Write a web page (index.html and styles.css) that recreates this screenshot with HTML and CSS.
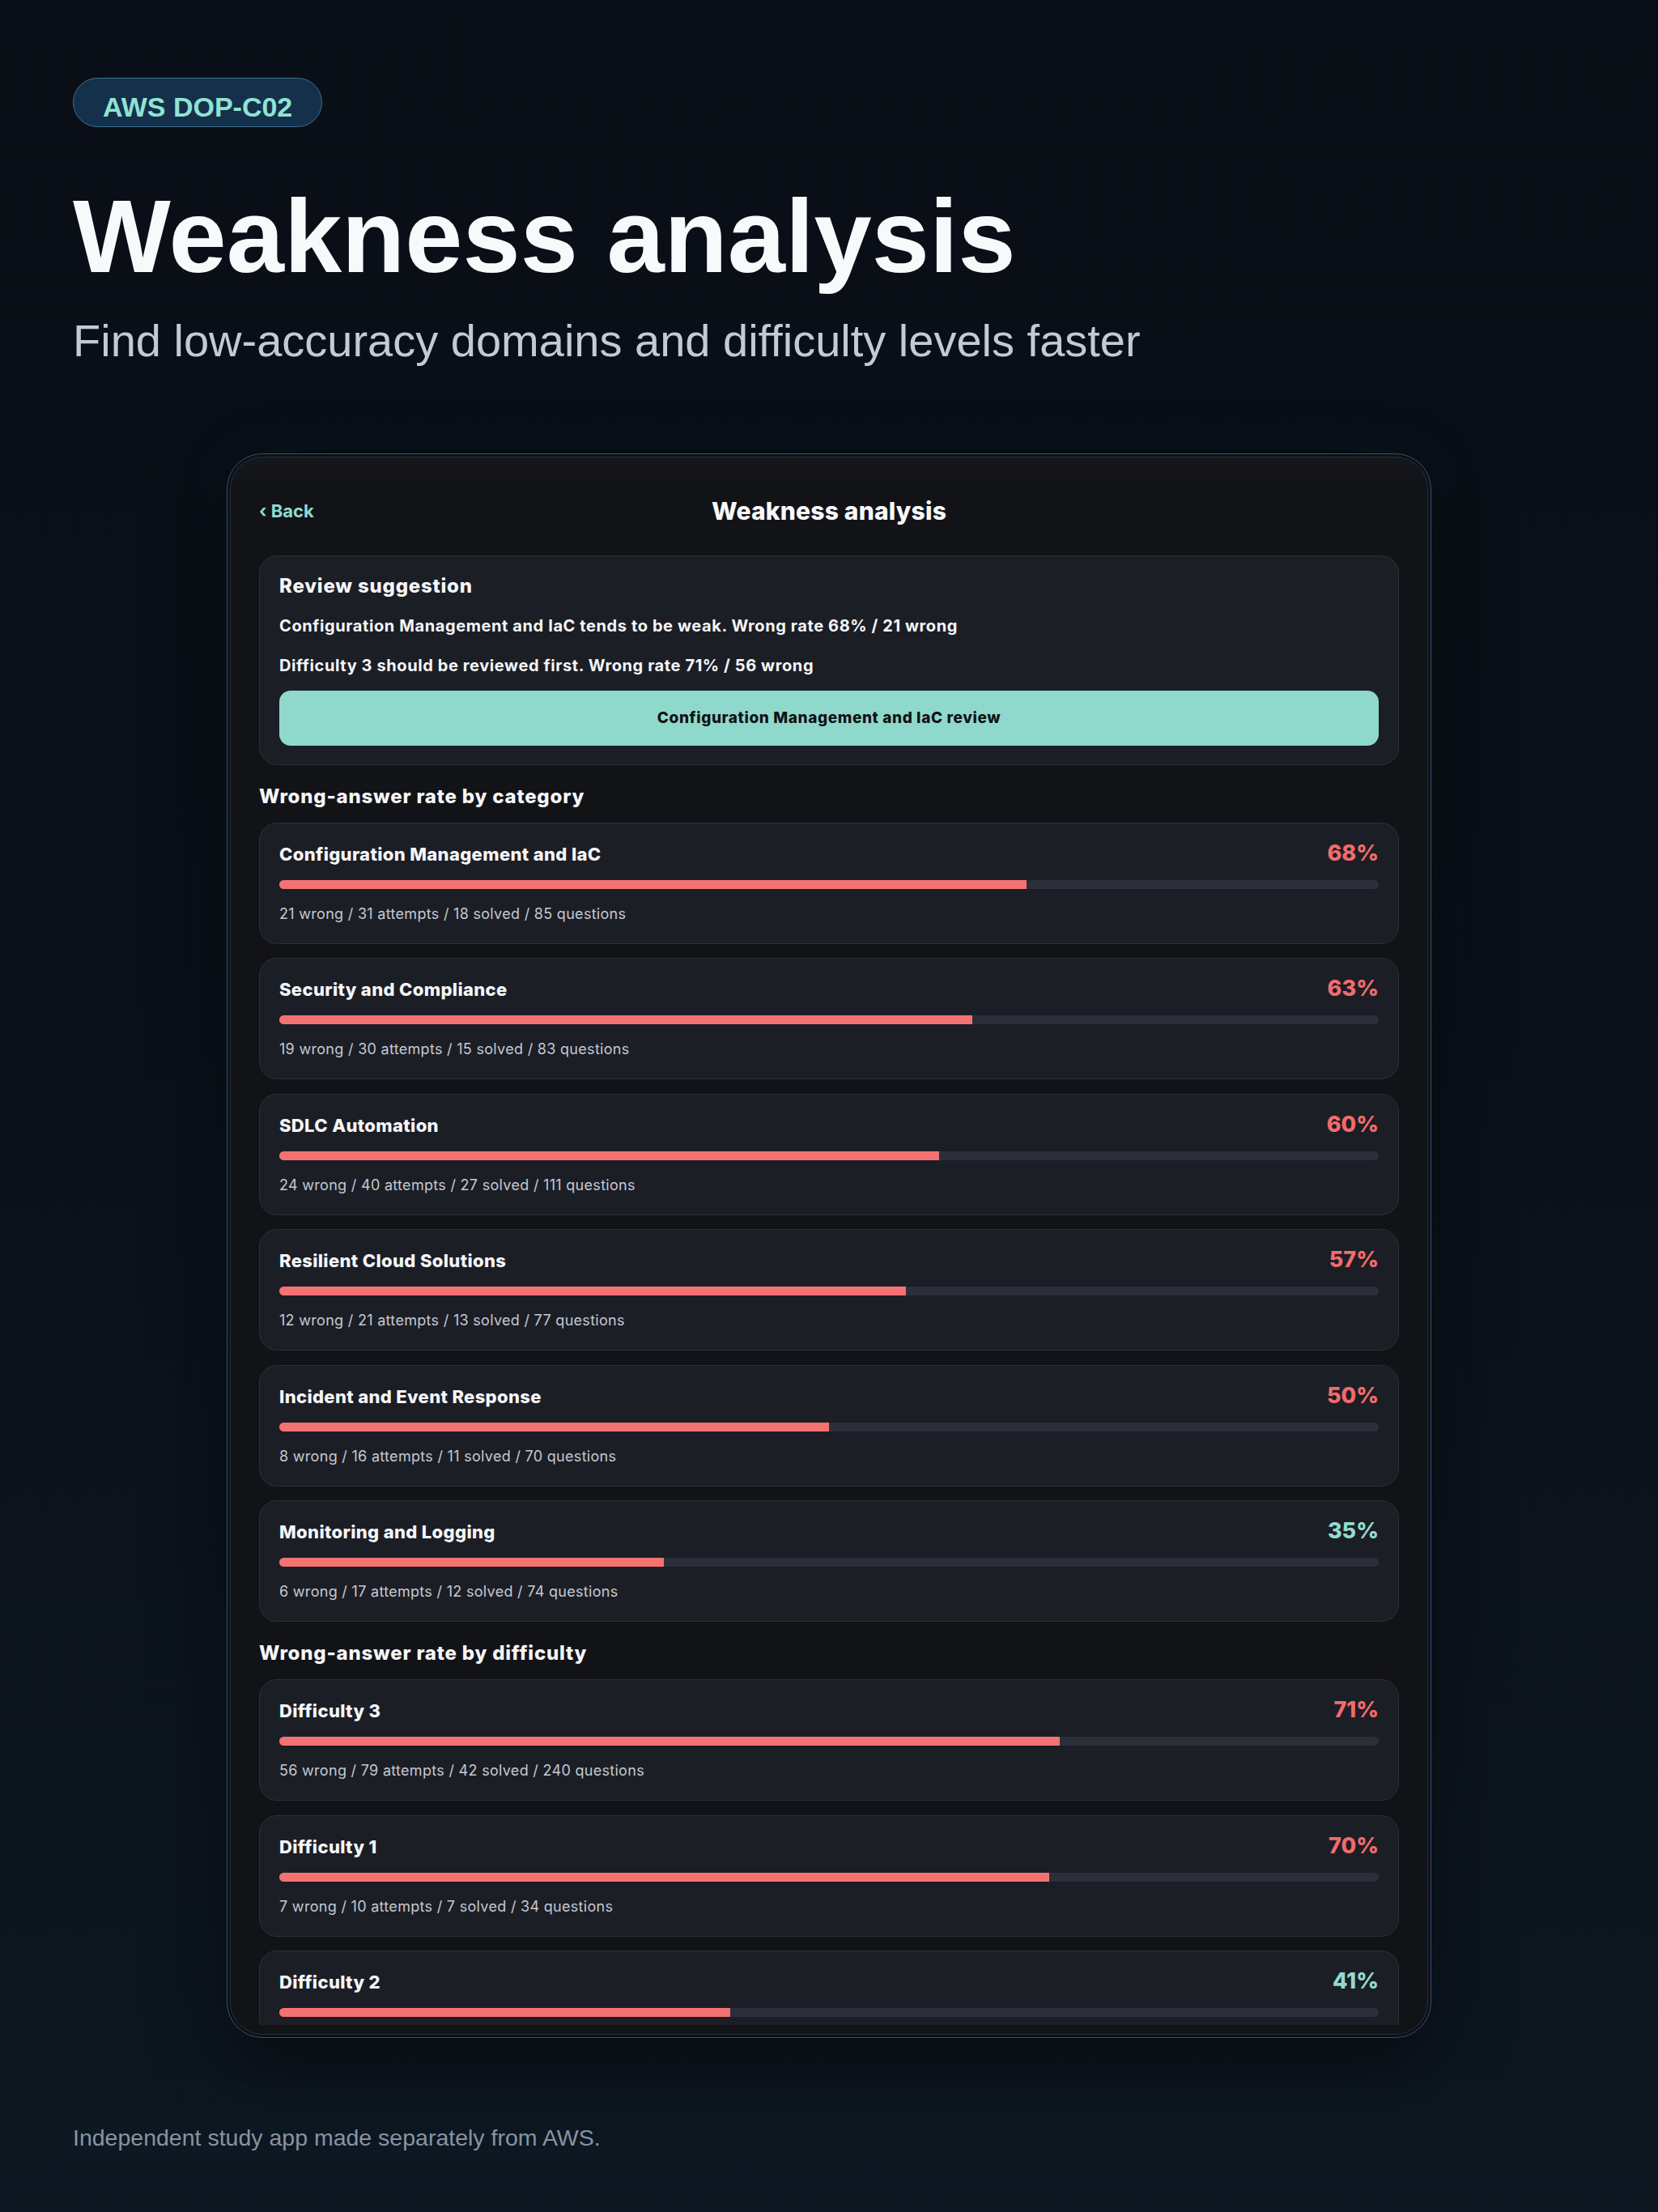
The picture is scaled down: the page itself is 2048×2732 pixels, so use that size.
FILE: index.html
```html
<!DOCTYPE html>
<html lang="en">
<head>
<meta charset="utf-8">
<title>Weakness analysis</title>
<link rel="stylesheet" href="styles.css">
</head>
<body>
<div class="page">
  <header class="hero">
    <span class="badge">AWS DOP-C02</span>
    <h1 class="title">Weakness analysis</h1>
    <p class="subtitle">Find low-accuracy domains and difficulty levels faster</p>
  </header>

  <div class="device">
    <div class="screen">
      <div class="nav">
        <span class="back">‹ Back</span>
        <span class="nav-title">Weakness analysis</span>
        <span class="nav-spacer"></span>
      </div>
      <div class="scroll">
        <section class="card review">
          <h2 class="review-title">Review suggestion</h2>
          <p class="review-line">Configuration Management and IaC tends to be weak. Wrong rate 68% / 21 wrong</p>
          <p class="review-line last">Difficulty 3 should be reviewed first. Wrong rate 71% / 56 wrong</p>
          <div class="btn">Configuration Management and IaC review</div>
        </section>

        <h3 class="section-title">Wrong-answer rate by category</h3>
        <div class="list">
          <div class="card stat">
            <div class="row"><span class="name">Configuration Management and IaC</span><span class="pct bad">68%</span></div>
            <div class="track"><div class="fill" style="width:68%"></div></div>
            <div class="meta">21 wrong / 31 attempts / 18 solved / 85 questions</div>
          </div>
          <div class="card stat">
            <div class="row"><span class="name">Security and Compliance</span><span class="pct bad">63%</span></div>
            <div class="track"><div class="fill" style="width:63%"></div></div>
            <div class="meta">19 wrong / 30 attempts / 15 solved / 83 questions</div>
          </div>
          <div class="card stat">
            <div class="row"><span class="name">SDLC Automation</span><span class="pct bad">60%</span></div>
            <div class="track"><div class="fill" style="width:60%"></div></div>
            <div class="meta">24 wrong / 40 attempts / 27 solved / 111 questions</div>
          </div>
          <div class="card stat">
            <div class="row"><span class="name">Resilient Cloud Solutions</span><span class="pct bad">57%</span></div>
            <div class="track"><div class="fill" style="width:57%"></div></div>
            <div class="meta">12 wrong / 21 attempts / 13 solved / 77 questions</div>
          </div>
          <div class="card stat">
            <div class="row"><span class="name">Incident and Event Response</span><span class="pct bad">50%</span></div>
            <div class="track"><div class="fill" style="width:50%"></div></div>
            <div class="meta">8 wrong / 16 attempts / 11 solved / 70 questions</div>
          </div>
          <div class="card stat">
            <div class="row"><span class="name">Monitoring and Logging</span><span class="pct ok">35%</span></div>
            <div class="track"><div class="fill" style="width:35%"></div></div>
            <div class="meta">6 wrong / 17 attempts / 12 solved / 74 questions</div>
          </div>
        </div>

        <h3 class="section-title">Wrong-answer rate by difficulty</h3>
        <div class="list">
          <div class="card stat">
            <div class="row"><span class="name">Difficulty 3</span><span class="pct bad">71%</span></div>
            <div class="track"><div class="fill" style="width:71%"></div></div>
            <div class="meta">56 wrong / 79 attempts / 42 solved / 240 questions</div>
          </div>
          <div class="card stat">
            <div class="row"><span class="name">Difficulty 1</span><span class="pct bad">70%</span></div>
            <div class="track"><div class="fill" style="width:70%"></div></div>
            <div class="meta">7 wrong / 10 attempts / 7 solved / 34 questions</div>
          </div>
          <div class="card stat">
            <div class="row"><span class="name">Difficulty 2</span><span class="pct ok">41%</span></div>
            <div class="track"><div class="fill" style="width:41%"></div></div>
          </div>
        </div>
      </div>
    </div>
  </div>

  <p class="footer">Independent study app made separately from AWS.</p>
</div>
</body>
</html>
```
FILE: styles.css
```css
html, body {
  margin: 0;
  padding: 0;
}

body {
  width: 2048px;
  min-height: 2732px;
  background: linear-gradient(180deg, #0a0e16 0%, #0a1019 45%, #0e1822 100%);
  font-family: "Liberation Sans", Arial, sans-serif;
}

.page {
  box-sizing: border-box;
  height: 2732px;
  padding: 96px 90px 0;
}

.hero {
  display: flex;
  flex-direction: column;
  align-items: flex-start;
}

.badge {
  display: inline-block;
  padding: 16px 36px 4px;
  font-size: 34px;
  line-height: 39px;
  font-weight: 700;
  color: #8fe3d4;
  background: #15304a;
  border: 1px solid #3f6f92;
  border-radius: 31px;
}

.title {
  margin: 71px 0 0;
  font-size: 128px;
  line-height: 1;
  font-weight: 700;
  color: #f7f9fb;
}

.subtitle {
  margin: 31px 0 0;
  font-size: 56px;
  line-height: 1.2;
  font-weight: 400;
  color: #c3cad5;
}

.device {
  box-sizing: border-box;
  width: 1488px;
  margin: 106px auto 0;
  padding: 3px;
  border: 1px solid #3a5068;
  border-radius: 44px;
  background: #0c1016;
  box-shadow: 0 30px 90px rgba(0, 0, 0, 0.55), 0 0 60px rgba(20, 40, 60, 0.25);
}

.screen {
  padding: 48px 35px 11px;
  border: 1px solid #213041;
  border-radius: 40px;
  background: linear-gradient(180deg, #15171c 0px, #121317 40px, #121317 100%);
  font-family: Inter, "Noto Sans", sans-serif;
  color: #f5f6f8;
  overflow: hidden;
}

.nav {
  display: grid;
  grid-template-columns: 1fr auto 1fr;
  align-items: center;
  height: 36px;
}

.back {
  font-size: 22px;
  line-height: 26px;
  font-weight: 700;
  color: #8edccc;
}

.nav-title {
  font-size: 30px;
  line-height: 36px;
  font-weight: 800;
  color: #f7f8fa;
  letter-spacing: 0.2px;
}

.scroll {
  margin-top: 37px;
  height: 1815px;
  overflow: hidden;
}

.card {
  background: #1c1e26;
  border: 1px solid #2c303c;
  border-radius: 22px;
}

.review {
  padding: 24px 24px 23px;
}

.review-title {
  margin: 0 0 21px;
  font-size: 24px;
  line-height: 26.4px;
  font-weight: 800;
  letter-spacing: 0.8px;
}

.review-line {
  margin: 0 0 21px;
  font-size: 20px;
  line-height: 28px;
  font-weight: 700;
  letter-spacing: 0.6px;
}

.review-line.last {
  margin-bottom: 17px;
}

.btn {
  display: flex;
  align-items: center;
  justify-content: center;
  height: 68px;
  border-radius: 14px;
  background: #8fd9cc;
  color: #101215;
  font-size: 19px;
  font-weight: 800;
  letter-spacing: 0.6px;
}

.section-title {
  margin: 24px 0 17px;
  font-size: 24px;
  line-height: 30px;
  font-weight: 800;
  letter-spacing: 0.8px;
}

.list {
  display: flex;
  flex-direction: column;
  gap: 17.5px;
}

.stat {
  padding: 20px 24px 24px;
}

.row {
  display: flex;
  justify-content: space-between;
  align-items: baseline;
  height: 34px;
  line-height: 34px;
}

.name {
  font-size: 22px;
  line-height: 29.6px;
  font-weight: 800;
  letter-spacing: 0.35px;
}

.pct {
  font-size: 27px;
  line-height: 34px;
  font-weight: 800;
}

.pct.bad {
  color: #f26b6b;
}

.pct.ok {
  color: #8fdccf;
}

.track {
  margin-top: 16px;
  height: 11px;
  border-radius: 6px;
  background: #2a2f39;
  overflow: hidden;
}

.fill {
  height: 100%;
  background: #f47272;
}

.meta {
  margin-top: 19px;
  font-size: 18px;
  line-height: 24px;
  color: #c5c9d1;
  letter-spacing: 0.3px;
}

.footer {
  margin: 106px 0 0;
  font-size: 28.5px;
  line-height: 1.2;
  color: #8793a3;
}
```
